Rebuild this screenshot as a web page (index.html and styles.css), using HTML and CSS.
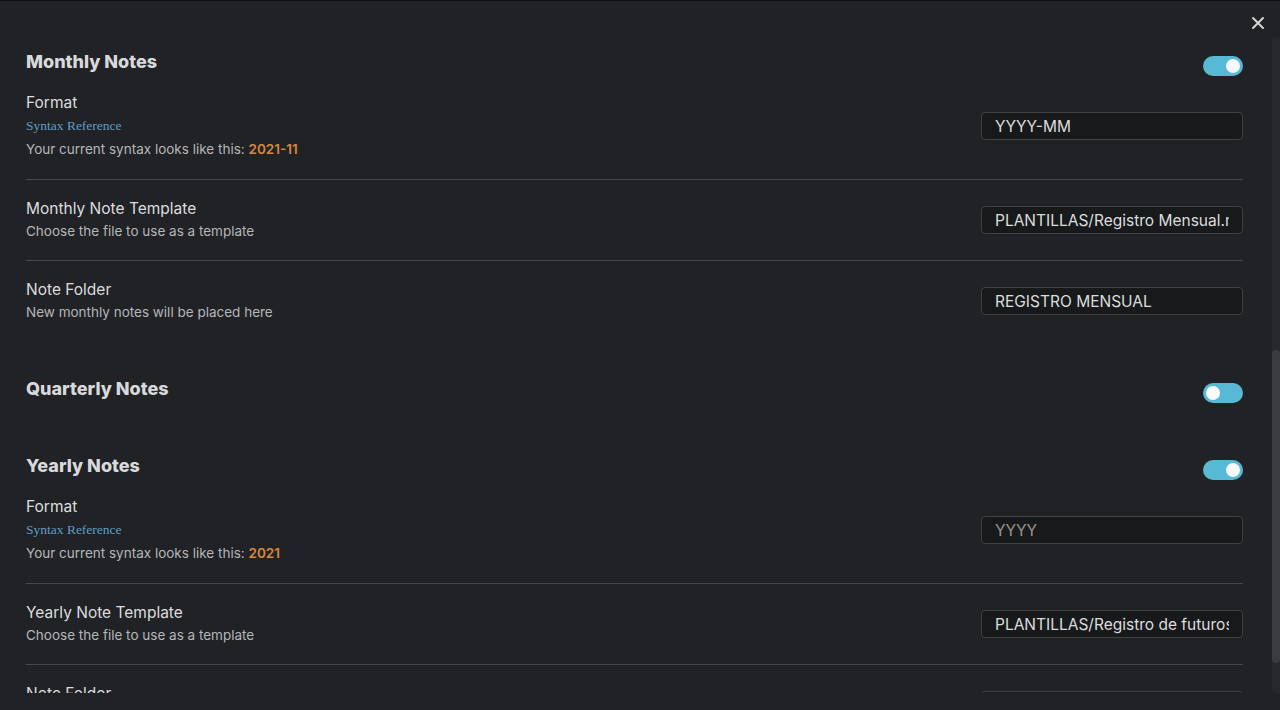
FILE: index.html
```html
<!DOCTYPE html>
<html>
<head>
<meta charset="utf-8">
<link rel="stylesheet" href="styles.css">
</head>
<body>
<div class="modal">
  <div class="topline"></div>
  <div class="modal-header">
    <button class="close" aria-label="Close">
      <svg width="14" height="14" viewBox="0 0 14 14"><path d="M2 2 L12 12 M12 2 L2 12" stroke="#d4d4d6" stroke-width="2" stroke-linecap="round" fill="none"/></svg>
    </button>
  </div>
  <div class="scroll-wrap">
    <div class="content">
      <section class="section">
        <div class="heading-row">
          <h3 class="heading">Monthly Notes</h3>
          <span class="toggle on"><span class="knob"></span></span>
        </div>
        <div class="item first">
          <div class="info">
            <div class="name">Format</div>
            <a class="link">Syntax Reference</a>
            <div class="desc">Your current syntax looks like this: <b class="value">2021-11</b></div>
          </div>
          <div class="control"><input class="text" value="YYYY-MM"></div>
        </div>
        <div class="item">
          <div class="info">
            <div class="name">Monthly Note Template</div>
            <div class="desc">Choose the file to use as a template</div>
          </div>
          <div class="control"><input class="text" value="PLANTILLAS/Registro Mensual.md"></div>
        </div>
        <div class="item">
          <div class="info">
            <div class="name">Note Folder</div>
            <div class="desc">New monthly notes will be placed here</div>
          </div>
          <div class="control"><input class="text" value="REGISTRO MENSUAL"></div>
        </div>
      </section>

      <section class="section empty">
        <div class="heading-row">
          <h3 class="heading">Quarterly Notes</h3>
          <span class="toggle on off-pos"><span class="knob"></span></span>
        </div>
      </section>

      <section class="section">
        <div class="heading-row">
          <h3 class="heading">Yearly Notes</h3>
          <span class="toggle on"><span class="knob"></span></span>
        </div>
        <div class="item first">
          <div class="info">
            <div class="name">Format</div>
            <a class="link">Syntax Reference</a>
            <div class="desc">Your current syntax looks like this: <b class="value">2021</b></div>
          </div>
          <div class="control"><input class="text" placeholder="YYYY"></div>
        </div>
        <div class="item">
          <div class="info">
            <div class="name">Yearly Note Template</div>
            <div class="desc">Choose the file to use as a template</div>
          </div>
          <div class="control"><input class="text" value="PLANTILLAS/Registro de futuros.md"></div>
        </div>
        <div class="item">
          <div class="info">
            <div class="name">Note Folder</div>
            <div class="desc">New yearly notes will be placed here</div>
          </div>
          <div class="control"><input class="text" value="REGISTRO ANUAL"></div>
        </div>
      </section>
    </div>
    <div class="scrollbar"><div class="thumb"></div></div>
  </div>
</div>
</body>
</html>
```

FILE: styles.css
```css
* { box-sizing: border-box; }
html, body {
  margin: 0;
  padding: 0;
  background: #212226;
  height: 710px;
  overflow: hidden;
  font-family: Inter, "Noto Sans", sans-serif;
  color: #dcddde;
}
.modal {
  width: 1280px;
  height: 710px;
  background: #212226;
}
.topline {
  height: 1px;
  background: #0f0f11;
}
.modal-header {
  height: 36px;
  display: flex;
  justify-content: flex-end;
  align-items: flex-start;
  padding: 10px 10px 0 0;
}
.close {
  width: 24px;
  height: 24px;
  border: 0;
  padding: 0;
  background: transparent;
  display: flex;
  align-items: center;
  justify-content: center;
}
.scroll-wrap {
  display: flex;
  height: 656px;
}
.content {
  flex: 1;
  overflow: hidden;
  padding: 0 29px 0 26px;
}
.scrollbar {
  width: 8px;
  background: #27282b;
  border-radius: 4px 0 0 4px;
  padding-top: 313px;
}
.thumb {
  height: 313px;
  background: #3b3c3f;
  border-radius: 4px;
}
.section { margin-top: 28px; }
.section:first-child { margin-top: 5px; }
.section.empty { padding-bottom: 9px; }
.heading-row {
  height: 40px;
  display: flex;
  align-items: center;
  justify-content: space-between;
}
.heading {
  margin: 0;
  font-size: 18px;
  font-weight: 800;
  color: #d8d9db;
  line-height: 22px;
}
.toggle {
  width: 40px;
  height: 20px;
  margin-top: 8px;
  border-radius: 10px;
  background: #3a3b3f;
  display: flex;
  align-items: center;
  justify-content: flex-start;
  padding: 0 3px;
}
.toggle.on {
  background: #57b9d4;
  justify-content: flex-end;
}
.toggle.on.off-pos { justify-content: flex-start; }
.knob {
  width: 14px;
  height: 14px;
  border-radius: 50%;
  background: #f7f9fb;
}
.item {
  display: flex;
  align-items: center;
  justify-content: space-between;
  border-top: 1px solid #46474a;
  padding: 18px 0 18px;
}
.item.first {
  border-top: 0;
  padding: 10px 0 19px;
}
.info {
  display: flex;
  flex-direction: column;
}
.name {
  font-size: 15.5px;
  line-height: 22px;
  color: #dcddde;
}
.link {
  font-family: "Liberation Serif", "Times New Roman", serif;
  font-size: 13.5px;
  line-height: 24px;
  color: #5d9fc4;
}
.desc {
  font-size: 13.5px;
  line-height: 22px;
  color: #b5b6b9;
}
.value {
  color: #d5893f;
  font-weight: 600;
}
.control { display: flex; }
.text {
  width: 262px;
  height: 28px;
  background: #18191b;
  border: 1px solid #404145;
  border-radius: 4px;
  padding: 0 13px;
  font-family: Inter, "Noto Sans", sans-serif;
  font-size: 15.5px;
  color: #dcddde;
  outline: none;
}
.text::placeholder { color: #99968a; }
```
